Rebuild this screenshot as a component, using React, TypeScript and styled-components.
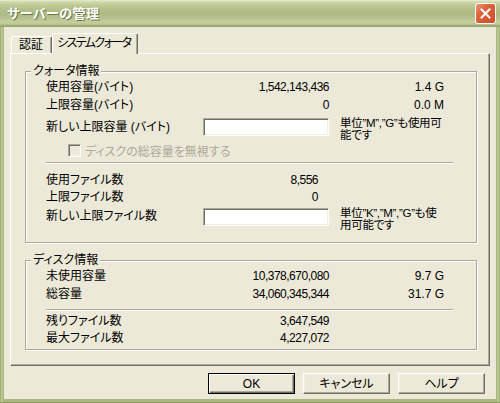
import React from "react";
import styled, { createGlobalStyle } from "styled-components";

const FONT = `"Liberation Sans", "Noto Sans CJK JP", sans-serif`;

const GlobalStyle = createGlobalStyle`
  html, body {
    margin: 0;
    padding: 0;
  }
  body {
    width: 500px;
    height: 403px;
    overflow: hidden;
    font-family: ${FONT};
    font-size: 12px;
    font-feature-settings: "palt";
    color: #000;
  }
  * { box-sizing: border-box; }
`;

const Window = styled.div`
  width: 500px;
  height: 403px;
  display: flex;
  flex-direction: column;
  background: linear-gradient(to right, #8d9b62 0px, #b7c490 1px, #c3cd9d 2px, #aab880 3px, #aab880 497px, #c3cd9d 498px, #b7c490 499px, #8d9b62 500px);
  box-shadow: inset 0 -1px 0 #8d9b62;
  border-radius: 3px 3px 0 0;
  overflow: hidden;
`;

const TitleBar = styled.div`
  height: 27px;
  flex: none;
  display: flex;
  align-items: center;
  justify-content: space-between;
  padding: 0 4px 2px 7px;
  background: linear-gradient(
    to bottom,
    #e8edcf 0px,
    #d0d9ad 2px,
    #bfca98 5px,
    #b1be88 10px,
    #adba83 14px,
    #b6c28d 18px,
    #c4ce9e 22px,
    #bcc794 24px,
    #9ca970 26px,
    #8f9c63 27px
  );
`;

const Title = styled.span`
  color: #fff;
  font-weight: bold;
  font-size: 13px;
  letter-spacing: 0.5px;
  text-shadow: 1px 1px 0 #6c7744;
`;

const CloseButton = styled.div`
  width: 21px;
  height: 21px;
  border: 1px solid #fff;
  border-radius: 3px;
  background: linear-gradient(135deg, #ec9a78 0%, #dc643c 35%, #cd4e27 100%);
  display: flex;
  align-items: center;
  justify-content: center;
  margin-top: 2px;
`;

const Client = styled.div`
  flex: 1;
  margin: 0 4px 4px 4px;
  background: #ece9d8;
  padding: 6px 6px 0 6px;
  display: flex;
  flex-direction: column;
`;

const TabStrip = styled.div`
  height: 20px;
  display: flex;
  align-items: flex-end;
  padding-left: 1px;
`;

const Tab = styled.div<{ $selected?: boolean }>`
  position: relative;
  z-index: ${(p) => (p.$selected ? 1 : 0)};
  height: ${(p) => (p.$selected ? 21 : 17)}px;
  margin-bottom: ${(p) => (p.$selected ? -1 : 0)}px;
  padding: ${(p) => (p.$selected ? "2px 7px 0 4px" : "1px 8px 0 7px")};
  letter-spacing: ${(p) => (p.$selected ? "-1.6px" : "0")};
  background: #ece9d8;
  border-top: 1px solid #fff;
  border-left: 1px solid #fff;
  border-right: 1px solid #716f64;
  box-shadow: inset -1px 0 0 #aca899;
  border-radius: 2px 2px 0 0;
  line-height: 14px;
  white-space: nowrap;
`;

const Panel = styled.div`
  height: 313px;
  border: 1px solid;
  border-color: #fff #716f64 #716f64 #fff;
  box-shadow: inset -1px -1px 0 #aca899;
  padding: 10px 12px 0 14px;
  display: flex;
  flex-direction: column;
  gap: 10px;
`;

const Group = styled.fieldset`
  margin: 0;
  padding: 0;
  min-width: 0;
  border: 1px solid #aca899;
  box-shadow: inset 1px 1px 0 #fff, 1px 1px 0 #fff;
`;

const Legend = styled.legend`
  margin-left: 5px;
  padding: 0 2px;
  line-height: 14px;
  background: #ece9d8;
`;

const GroupBody = styled.div<{ $pb: number }>`
  padding: 0 0 ${(p) => p.$pb}px 20px;
  display: flex;
  flex-direction: column;
`;

const Row = styled.div<{ $h: number; $top?: number }>`
  height: ${(p) => p.$h}px;
  display: grid;
  grid-template-columns: 157px 126px 115px;
  align-items: ${(p) => (p.$top !== undefined ? "start" : "center")};
  padding-top: ${(p) => p.$top ?? 0}px;
  line-height: 14px;
`;

const Label = styled.span<{ $mt?: number }>`
  white-space: nowrap;
  margin-top: ${(p) => p.$mt ?? 0}px;
`;

const Value = styled.span<{ $inset?: number }>`
  text-align: right;
  padding-right: ${(p) => p.$inset ?? 0}px;
  letter-spacing: -0.5px;
  white-space: nowrap;
`;

const Unit = styled.span`
  text-align: right;
  white-space: nowrap;
`;

const NumberInput = styled.input`
  width: 126px;
  height: 18px;
  margin: 1px 0 0 0;
  padding: 0 2px;
  font: inherit;
  background: #fff;
  border: 1px solid;
  border-color: #aca899 #fff #fff #aca899;
  box-shadow: inset 1px 1px 0 #716f64, inset -1px -1px 0 #f1efe2;
  outline: none;
`;

const Note = styled.span<{ $mt: number }>`
  margin: ${(p) => p.$mt}px 0 0 11px;
  font-size: 11.5px;
  line-height: 12px;
  letter-spacing: -0.3px;
  white-space: nowrap;
  grid-column: 3;
`;

const NoteLine = styled.span`
  display: block;
  height: 12px;
  overflow: visible;
`;

const CheckRow = styled.div`
  height: 22px;
  display: flex;
  align-items: center;
  padding-left: 22px;
  gap: 4px;
  color: #aca899;
`;

const CheckBox = styled.span`
  width: 13px;
  height: 13px;
  flex: none;
  border: 1px solid;
  border-color: #aca899 #fff #fff #aca899;
  box-shadow: inset 1px 1px 0 #716f64, inset -1px -1px 0 #f1efe2;
  background: #ece9d8;
`;

const Separator = styled.div<{ $mt: number; $mb: number }>`
  width: 407px;
  height: 2px;
  margin: ${(p) => p.$mt}px 0 ${(p) => p.$mb}px 0;
  border-top: 1px solid #aca899;
  border-bottom: 1px solid #fff;
`;

const ButtonBar = styled.div`
  display: flex;
  justify-content: flex-end;
  gap: 8px;
  margin-top: 7px;
  padding-right: 5px;
`;

const DialogButton = styled.button<{ $default?: boolean }>`
  width: 87px;
  height: 21px;
  margin: 0;
  padding: 0;
  font: inherit;
  color: #000;
  background: #ece9d8;
  border: 1px solid;
  border-color: ${(p) => (p.$default ? "#000" : "#fff #716f64 #716f64 #fff")};
  box-shadow: ${(p) =>
    p.$default
      ? "inset 1px 1px 0 #fff, inset -1px -1px 0 #716f64, inset -2px -2px 0 #aca899"
      : "inset -1px -1px 0 #aca899, inset 1px 1px 0 #f1efe2"};
  line-height: 14px;
`;

export default function App() {
  return (
    <>
      <GlobalStyle />
      <Window>
        <TitleBar>
          <Title>サーバーの管理</Title>
          <CloseButton>
            <svg width="11" height="11" viewBox="0 0 11 11">
              <path d="M1.5 1.5 L9.5 9.5 M9.5 1.5 L1.5 9.5" stroke="#fff" strokeWidth="2" strokeLinecap="square" />
            </svg>
          </CloseButton>
        </TitleBar>
        <Client>
          <TabStrip>
            <Tab>認証</Tab>
            <Tab $selected>システムクォータ</Tab>
          </TabStrip>
          <Panel>
            <Group>
              <Legend>クォータ情報</Legend>
              <GroupBody $pb={15}>
                <Row $h={18}>
                  <Label>使用容量(バイト)</Label>
                  <Value>1,542,143,436</Value>
                  <Unit>1.4 G</Unit>
                </Row>
                <Row $h={17}>
                  <Label>上限容量(バイト)</Label>
                  <Value>0</Value>
                  <Unit>0.0 M</Unit>
                </Row>
                <Row $h={26} $top={4}>
                  <Label $mt={3}>新しい上限容量 (バイト)</Label>
                  <NumberInput />
                  <Note $mt={0}>
                    <NoteLine>単位”M”,”G”も使用可</NoteLine>
                    <NoteLine>能です</NoteLine>
                  </Note>
                </Row>
                <CheckRow>
                  <CheckBox />
                  <span>ディスクの総容量を無視する</span>
                </CheckRow>
                <Separator $mt={1} $mb={7} />
                <Row $h={17}>
                  <Label>使用ファイル数</Label>
                  <Value $inset={11}>8,556</Value>
                </Row>
                <Row $h={17}>
                  <Label>上限ファイル数</Label>
                  <Value $inset={11}>0</Value>
                </Row>
                <Row $h={22} $top={2}>
                  <Label $mt={2}>新しい上限ファイル数</Label>
                  <NumberInput />
                  <Note $mt={0}>
                    <NoteLine>単位”K”,”M”,”G”も使</NoteLine>
                    <NoteLine>用可能です</NoteLine>
                  </Note>
                </Row>
              </GroupBody>
            </Group>
            <Group>
              <Legend>ディスク情報</Legend>
              <GroupBody $pb={3}>
                <Row $h={18}>
                  <Label>未使用容量</Label>
                  <Value>10,378,670,080</Value>
                  <Unit>9.7 G</Unit>
                </Row>
                <Row $h={18}>
                  <Label>総容量</Label>
                  <Value>34,060,345,344</Value>
                  <Unit>31.7 G</Unit>
                </Row>
                <Separator $mt={6} $mb={1} />
                <Row $h={17}>
                  <Label>残りファイル数</Label>
                  <Value>3,647,549</Value>
                </Row>
                <Row $h={17}>
                  <Label>最大ファイル数</Label>
                  <Value>4,227,072</Value>
                </Row>
              </GroupBody>
            </Group>
          </Panel>
          <ButtonBar>
            <DialogButton $default>OK</DialogButton>
            <DialogButton>キャンセル</DialogButton>
            <DialogButton>ヘルプ</DialogButton>
          </ButtonBar>
        </Client>
      </Window>
    </>
  );
}
